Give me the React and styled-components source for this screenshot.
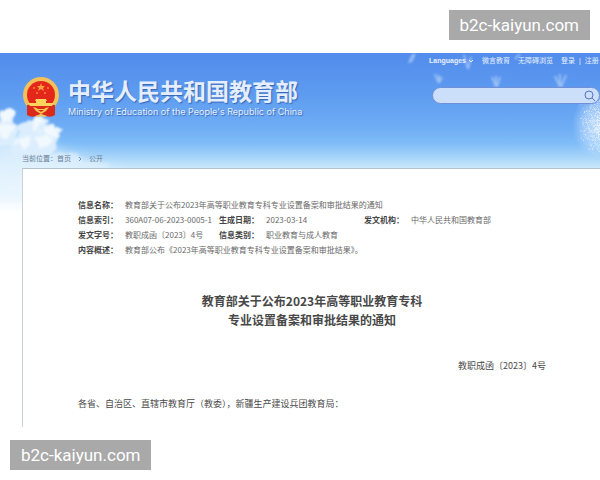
import React from "react";
import styled, { createGlobalStyle } from "styled-components";

const GlobalStyle = createGlobalStyle`
  * {
    box-sizing: border-box;
  }

  body {
    margin: 0;
    background: #fff;
    font-family: "Liberation Sans", "Noto Sans CJK SC", sans-serif;
  }
`;

// Styles
const Page = styled.div`
  display: flex;
  flex-direction: column;
  gap: 13px;
  padding: 10px 0;
  overflow: hidden;
`;

const SiteTag = styled.div`
  align-self: ${props => (props.$end ? "flex-end" : "flex-start")};
  margin: 0 10px;
  padding: 0 11px;
  background: #a9a9a9;
  color: #fff;
  font-family: Roboto, sans-serif;
  font-size: 17px;
  font-weight: 400;
  line-height: 30px;
`;

const Site = styled.div`
  position: relative;
  overflow: hidden;
  background: linear-gradient(
    #538cec 0,
    #5d9bf0 40px,
    #6fadf5 75px,
    #7fbcf7 90px,
    #a6d4f9 104px,
    #c6e6fb 114px,
    #e0f1fd 128px,
    #fff 160px
  );
`;

const Sky = styled.svg`
  position: absolute;
  top: 0;
  ${props => (props.$right ? "right: 0;" : "left: 0;")}
`;

const Header = styled.header`
  position: relative;
  display: flex;
  justify-content: space-between;
  height: 96px;
  padding-left: 22px;
`;

const Brand = styled.div`
  display: flex;
  gap: 8px;
  padding-top: 24px;

  h1 {
    margin: 0;
    color: #e4eeff;
    font-size: 23px;
    font-weight: 700;
    line-height: 30px;
    text-shadow: 1px 1px 1px #3565b4;
  }

  p {
    margin: 0;
    color: #e4eeff;
    font-family: Inter, sans-serif;
    font-size: 9px;
    line-height: 10px;
    text-shadow: 1px 1px 1px #3565b4;
  }
`;

const Tools = styled.div`
  width: 171px;
`;

const TopNav = styled.nav`
  display: flex;
  align-items: center;
  height: 16px;
  gap: 8px;
  white-space: nowrap;

  a {
    color: #e6f0ff;
    font-size: 7px;
    line-height: 10px;
    text-decoration: none;
  }

  span {
    display: flex;
    gap: 4px;
    color: #e6f0ff;
    font-size: 7px;
    line-height: 10px;
  }
`;

const Search = styled.form`
  display: flex;
  align-items: center;
  height: 17px;
  margin: 18px 0 0 3px;
  border: 1px solid #6f8fd6;
  border-radius: 9px;
  background: #cbdffb;

  input {
    flex: 1;
    min-width: 0;
    height: 14px;
    padding: 0 8px;
    border: 0;
    background: none;
    font-size: 9px;
  }

  button {
    display: flex;
    padding: 0 3px;
    border: 0;
    background: none;
  }
`;

const Breadcrumb = styled.nav`
  position: relative;
  display: flex;
  align-items: center;
  gap: 7px;
  height: 19px;
  padding-left: 22px;
  color: #687e93;
  font-size: 7px;
  line-height: 10px;

  a {
    color: inherit;
    text-decoration: none;
  }
`;

const Notice = styled.main`
  position: relative;
  margin-left: 22px;
  padding: 28px 54px 15px 55px;
  border-top: 1px solid #b5c3cd;
  border-left: 1px solid #ccd3d8;
  background: #fff;
  color: #4a4a4a;
`;

const InfoTable = styled.table`
  border-collapse: collapse;
  font-family: "Noto Sans CJK SC", sans-serif;
  font-size: 8px;
  line-height: 15px;
  white-space: nowrap;

  th,
  td {
    padding: 0;
    text-align: left;
  }

  th {
    min-width: 47px;
    color: #444;
    font-weight: 700;
  }

  td {
    min-width: 94px;
    color: #686868;
  }

  td.date {
    min-width: 98px;
  }
`;

const Title = styled.h2`
  margin: 34px 0 0;
  color: #484848;
  font-family: "Noto Sans CJK SC", sans-serif;
  font-size: 12px;
  font-weight: 700;
  line-height: 19px;
  text-align: center;
`;

const Text = styled.p`
  margin: ${props => (props.$right ? "29px 0 0" : "22px 0 0")};
  font-family: "Noto Sans CJK SC", sans-serif;
  font-size: 9px;
  line-height: 16px;
  text-align: ${props => (props.$right ? "right" : "left")};
`;

const Clouds = () => (
  <Sky width="160" height="190" viewBox="0 0 160 190" aria-hidden="true">
    <defs>
      <filter id="puffy" x="-20%" y="-20%" width="140%" height="140%">
        <feTurbulence type="fractalNoise" baseFrequency=".11" numOctaves="3" seed="4" result="noise" />
        <feDisplacementMap
          in="SourceGraphic"
          in2="noise"
          scale="13"
          xChannelSelector="R"
          yChannelSelector="G"
          result="rough"
        />
        <feGaussianBlur in="rough" stdDeviation="1" />
      </filter>
      <filter id="haze" x="-40%" y="-40%" width="180%" height="180%">
        <feGaussianBlur stdDeviation="7" />
      </filter>
    </defs>
    <path d="M-10 80Q30 84 60 100Q100 112 125 125L90 145H-10Z" fill="#e6f4fe" opacity=".8" filter="url(#haze)" />
    <g fill="#dceefd" filter="url(#puffy)">
      <circle cx="6" cy="64" r="8" />
      <circle cx="2" cy="80" r="15" />
      <circle cx="26" cy="76" r="9" />
      <circle cx="38" cy="74" r="10" />
      <circle cx="50" cy="80" r="9" />
      <circle cx="44" cy="90" r="13" />
      <circle cx="26" cy="94" r="14" />
      <ellipse cx="66" cy="106" rx="18" ry="6" opacity=".7" />
      <ellipse cx="88" cy="113" rx="20" ry="6" opacity=".6" />
    </g>
    <g fill="#fff" opacity=".6" filter="url(#puffy)">
      <circle cx="7" cy="62" r="5" />
      <circle cx="5" cy="76" r="7" />
      <circle cx="36" cy="71" r="6" />
      <circle cx="52" cy="78" r="6" />
      <circle cx="43" cy="88" r="6" />
      <circle cx="24" cy="89" r="6" />
    </g>
  </Sky>
);

const Dandelion = () => {
  const spokes = [];
  for (let i = 0; i < 46; i++) {
    const angle = (i * Math.PI * 2) / 46;
    const reach = 15 + ((i * 7) % 9);
    spokes.push(
      <path
        key={i}
        d={`M199 72L${199 + Math.cos(angle) * reach} ${72 + Math.sin(angle) * (reach + 7)}`}
      />
    );
  }

  return (
    <Sky $right width="200" height="110" viewBox="0 0 200 110" aria-hidden="true">
      <defs>
        <radialGradient id="puff">
          <stop offset="0" stopColor="#fff" stopOpacity=".6" />
          <stop offset=".6" stopColor="#e4f2ff" stopOpacity=".4" />
          <stop offset="1" stopColor="#d5e9ff" stopOpacity="0" />
        </radialGradient>
        <filter id="fluff" x="-20%" y="-20%" width="140%" height="140%">
          <feTurbulence type="fractalNoise" baseFrequency=".3" numOctaves="2" seed="8" result="noise" />
          <feDisplacementMap
            in="SourceGraphic"
            in2="noise"
            scale="14"
            xChannelSelector="R"
            yChannelSelector="G"
          />
        </filter>
        <filter id="seed" x="-20%" y="-50%" width="140%" height="200%">
          <feGaussianBlur stdDeviation="1" />
        </filter>
      </defs>
      <ellipse cx="199" cy="72" rx="27" ry="34" fill="url(#puff)" />
      <g stroke="#fff" strokeWidth="1" strokeDasharray="2 2" opacity=".6" filter="url(#fluff)">
        {spokes}
      </g>
      <g fill="none" stroke="#d5e8ff" strokeWidth="2" opacity=".5" filter="url(#seed)">
        <path d="M15 1l-4 8m2-8l-4 9M35 21l3 8m1-7v8m3-6l-3 6M64 2l4 14m3-12l-3 12M92 24l4 10m0-11v11m4-10l-3 10M155 23l5 11m0-13v13m6-12l-5 12M120 1l-5 5" />
      </g>
    </Sky>
  );
};

const Emblem = () => (
  <svg width="38" height="41" viewBox="0 0 38 41" role="img" aria-label="国徽">
    <circle cx="19" cy="18" r="18" fill="#f3c05a" />
    <circle cx="19" cy="18" r="14" fill="#e3281b" />
    <path d="M5 28q6-1 9 3l5-1 5 1q3-4 9-3v10q-4 3-9 1l-5-2-5 2q-5 2-9-1z" fill="#dc2a1a" />
    <path d="M19 6l1 3h3l-2 2 1 3-3-2-3 2 1-3-2-2h3z" fill="#f9a13c" />
    <g fill="#f08a35">
      <circle cx="12" cy="11" r="1" />
      <circle cx="26" cy="11" r="1" />
      <circle cx="15" cy="16" r="1" />
      <circle cx="23" cy="16" r="1" />
    </g>
    <path d="M14 22h10l1 2h-1v2h8l-2 3H8l-2-3h8v-2h-1z" fill="#ffd45c" />
    <path d="M11 30q4 1 5 2h6q1-1 5-2l-3 4-5 3-5-3z" fill="#f6c650" />
    <path d="M16 33h6l-3 2z" fill="#dc2a1a" />
    <path d="M13 39l6-2 6 2-3 1-3-1-3 1z" fill="#f6c650" />
  </svg>
);

const App = () => {
  return (
    <>
      <GlobalStyle />
      <Page>
        <SiteTag $end>b2c-kaiyun.com</SiteTag>

        <Site>
          <Clouds />
          <Dandelion />
          <Header>
            <Brand>
              <Emblem />
              <div>
                <h1>中华人民共和国教育部</h1>
                <p>Ministry of Education of the People's Republic of China</p>
              </div>
            </Brand>
            <Tools>
              <TopNav>
                <a href="#languages">
                  <b>Languages</b>{" "}
                  <svg width="6" height="4" viewBox="0 0 6 4" fill="none" stroke="#e6f0ff">
                    <path d="M1 1l2 2 2-2" />
                  </svg>
                </a>
                <a href="#weiyan">微言教育</a>
                <a href="#accessible">无障碍浏览</a>
                <span>
                  <a href="#login">登录</a>|<a href="#register">注册</a>
                </span>
              </TopNav>
              <Search onSubmit={event => event.preventDefault()}>
                <input type="text" aria-label="搜索" />
                <button type="submit" aria-label="提交搜索">
                  <svg width="12" height="12" viewBox="0 0 12 12" fill="none" stroke="#5573c4">
                    <circle cx="5" cy="5" r="4" />
                    <path d="M8 8l3 3" />
                  </svg>
                </button>
              </Search>
            </Tools>
          </Header>

          <Breadcrumb>
            <span>
              当前位置：<a href="#home">首页</a>
            </span>
            <svg width="4" height="6" viewBox="0 0 4 6" fill="none" stroke="#7890a5">
              <path d="M1 1l2 2-2 2" />
            </svg>
            <a href="#open">公开</a>
          </Breadcrumb>

          <Notice>
            <InfoTable>
              <tbody>
                <tr>
                  <th scope="row">信息名称：</th>
                  <td colSpan={5}>
                    教育部关于公布2023年高等职业教育专科专业设置备案和审批结果的通知
                  </td>
                </tr>
                <tr>
                  <th scope="row">信息索引：</th>
                  <td>360A07-06-2023-0005-1</td>
                  <th scope="row">生成日期：</th>
                  <td className="date">2023-03-14</td>
                  <th scope="row">发文机构：</th>
                  <td>中华人民共和国教育部</td>
                </tr>
                <tr>
                  <th scope="row">发文字号：</th>
                  <td>教职成函〔2023〕4号</td>
                  <th scope="row">信息类别：</th>
                  <td colSpan={3}>职业教育与成人教育</td>
                </tr>
                <tr>
                  <th scope="row">内容概述：</th>
                  <td colSpan={5}>
                    教育部公布《2023年高等职业教育专科专业设置备案和审批结果》。
                  </td>
                </tr>
              </tbody>
            </InfoTable>

            <Title>
              教育部关于公布2023年高等职业教育专科
              <br />
              专业设置备案和审批结果的通知
            </Title>
            <Text $right>教职成函〔2023〕4号</Text>
            <Text>
              各省、自治区、直辖市教育厅（教委），新疆生产建设兵团教育局：
            </Text>
          </Notice>
        </Site>

        <SiteTag>b2c-kaiyun.com</SiteTag>
      </Page>
    </>
  );
};

export default App;
